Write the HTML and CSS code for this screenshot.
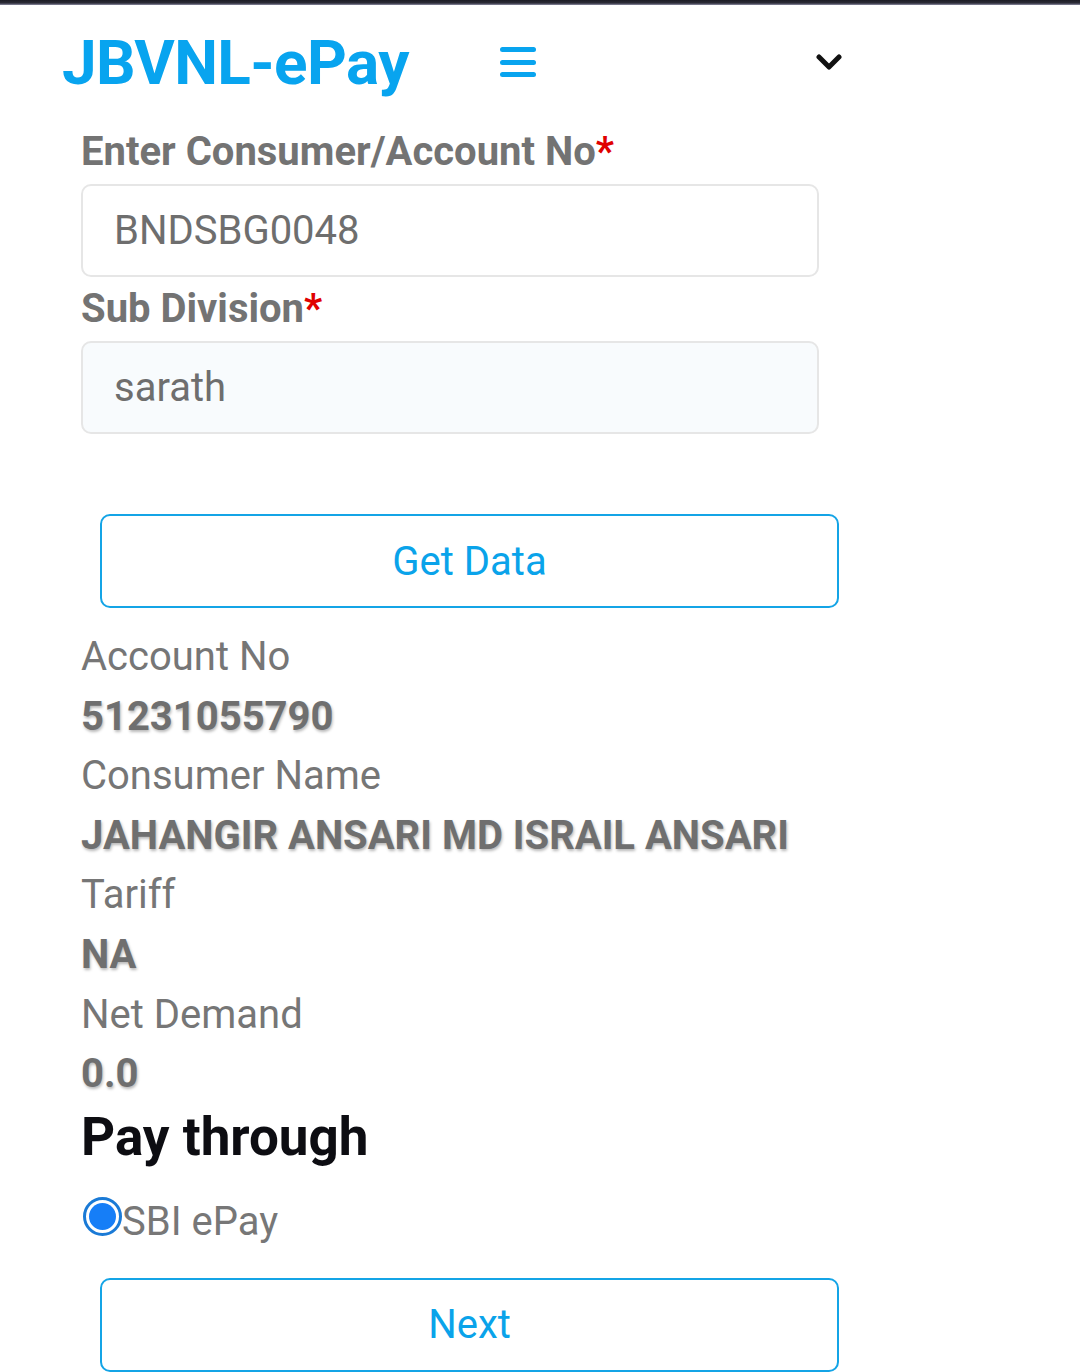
FILE: index.html
```html
<!DOCTYPE html>
<html lang="en">
<head>
<meta charset="utf-8">
<title>JBVNL-ePay</title>
<link rel="stylesheet" href="styles.css">
</head>
<body>
<div class="topbar"></div>
<header class="header">
  <div class="brand">JBVNL-ePay</div>
  <button class="menu" aria-label="menu">
    <svg width="36" height="31" viewBox="0 0 36 31"><rect x="0" y="0" width="36" height="5" rx="2.5"/><rect x="0" y="13" width="36" height="5" rx="2.5"/><rect x="0" y="25" width="36" height="5" rx="2.5"/></svg>
  </button>
  <button class="chev" aria-label="expand">
    <svg width="26" height="18" viewBox="0 0 26 18"><path d="M3 3 L13 13 L23 3" fill="none" stroke="#111" stroke-width="5" stroke-linecap="round" stroke-linejoin="round"/></svg>
  </button>
</header>
<main class="form">
  <label class="label">Enter Consumer/Account No<span class="req">*</span></label>
  <div class="input">BNDSBG0048</div>
  <label class="label">Sub Division<span class="req">*</span></label>
  <div class="input input-alt">sarath</div>
  <button class="btn btn-get">Get Data</button>
  <dl class="data">
    <dt>Account No</dt>
    <dd>51231055790</dd>
    <dt>Consumer Name</dt>
    <dd>JAHANGIR ANSARI MD ISRAIL ANSARI</dd>
    <dt>Tariff</dt>
    <dd>NA</dd>
    <dt>Net Demand</dt>
    <dd>0.0</dd>
  </dl>
  <h2 class="pay">Pay through</h2>
  <div class="radio-row"><span class="radio"><span class="dot"></span></span><span class="radio-text">SBI ePay</span></div>
  <button class="btn btn-next">Next</button>
</main>
</body>
</html>
```
FILE: styles.css
```css
html, body {
  margin: 0;
  padding: 0;
  background: #ffffff;
}
body {
  font-family: Roboto, "Noto Sans", sans-serif;
  width: 1080px;
  height: 1372px;
  overflow: hidden;
}
.topbar {
  height: 5px;
  background: linear-gradient(#1c1c24 0, #2c2c38 60%, #8a8aa0 100%);
}
.header {
  display: flex;
  align-items: center;
  height: 115px;
  width: 842px;
  padding-left: 62px;
  box-sizing: border-box;
}
.brand {
  flex: 0 0 438px;
  font-size: 62px;
  font-weight: 700;
  color: #08a4ef;
  letter-spacing: -0.6px;
  line-height: 1;
}
.menu, .chev {
  border: 0;
  background: none;
  padding: 0;
  display: flex;
}
.menu svg { fill: #08a4ef; }
.chev { margin-left: auto; }
.form {
  margin-left: 81px;
  width: 759px;
  display: flex;
  flex-direction: column;
  align-items: flex-start;
}
.label {
  font-size: 40px;
  font-weight: 700;
  color: #737373;
  margin-top: 8px;
  margin-bottom: 9px;
  line-height: 47px;
}
.req { color: #e00000; }
.input {
  box-sizing: border-box;
  width: 738px;
  height: 93px;
  border: 2px solid #e6e6e6;
  border-radius: 10px;
  background: #ffffff;
  font-size: 40px;
  color: #6e6e6e;
  display: flex;
  align-items: center;
  padding-left: 31px;
}
.input-alt { background: #f8fbfd; }
.btn {
  box-sizing: border-box;
  width: 739px;
  height: 94px;
  margin-left: 19px;
  border: 2.5px solid #14a4e6;
  border-radius: 10px;
  background: #ffffff;
  color: #0aa3ea;
  font-family: Roboto, sans-serif;
  font-size: 40px;
}
.btn-get { margin-top: 80px; }
.data {
  margin: 19px 0 0 0;
  font-size: 40px;
  line-height: 59.6px;
}
.data dt {
  color: #767676;
  font-weight: 400;
}
.data dd {
  margin: 0;
  color: #6f6f6f;
  font-weight: 700;
  text-shadow: 1px 2px 3px rgba(0,0,0,0.28);
}
.pay {
  margin: 2px 0 0 0;
  font-size: 53px;
  font-weight: 700;
  color: #0d0d12;
  line-height: 63px;
}
.radio-row {
  display: flex;
  align-items: center;
  height: 60px;
  margin-top: 18px;
}
.radio {
  box-sizing: border-box;
  width: 39px;
  height: 39px;
  margin-left: 2px;
  border: 3px solid #1a7ad6;
  border-radius: 50%;
  display: flex;
  align-items: center;
  justify-content: center;
}
.dot {
  width: 27px;
  height: 27px;
  border-radius: 50%;
  background: #167ef7;
}
.radio-text {
  font-size: 40px;
  color: #777777;
  padding-top: 9px;
}
.btn-next { margin-top: 31px; }
```
